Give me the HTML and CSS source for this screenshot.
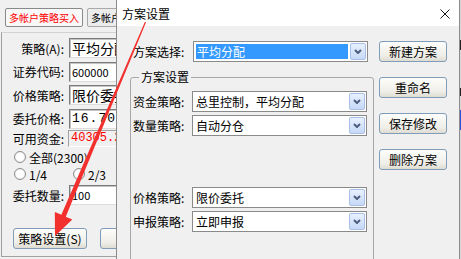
FILE: index.html
```html
<!DOCTYPE html>
<html lang="zh-CN">
<head>
<meta charset="utf-8">
<title>方案设置</title>
<link rel="stylesheet" href="styles.css">
</head>
<body>
<div class="screen">
  <div class="main">
    <div class="tabs">
      <div class="tab tab-active">多帐户策略买入</div>
      <div class="tab">多帐户策略卖出</div>
    </div>
    <div class="panel">
      <div class="frow r1"><span class="flabel">策略(A):</span><div class="field cjk">平均分配</div></div>
      <div class="frow r2"><span class="flabel">证券代码:</span><div class="field num">600000</div></div>
      <div class="frow r2"><span class="flabel">价格策略:</span><div class="field cjk">限价委托</div></div>
      <div class="frow r2"><span class="flabel">委托价格:</span><div class="field mono">16.70</div></div>
      <div class="frow rro"><span class="flabel">可用资金:</span><div class="field field-ro">40305.27</div></div>
      <div class="rrow rr1"><span class="opt"><span class="radio"></span>全部(2300)</span></div>
      <div class="rrow rr2"><span class="opt"><span class="radio"></span>1/4</span><span class="opt"><span class="radio"></span>2/3</span></div>
      <div class="frow rq"><span class="flabel">委托数量:</span><div class="field num">100</div></div>
      <div class="brow"><div class="btn btn-main">策略设置(S)</div><div class="btn btn-reset">重置</div></div>
    </div>
  </div>

  <div class="dialog">
    <div class="titlebar">
      <span class="title">方案设置</span>
      <svg class="close" width="10" height="10" viewBox="0 0 10 10"><path d="M0.5 0.5 L9.5 9.5 M9.5 0.5 L0.5 9.5" stroke="#1a1a1a" stroke-width="1" fill="none"/></svg>
    </div>
    <div class="dbody">
      <div class="dmain">
        <div class="selrow">
          <span class="slabel">方案选择:</span>
          <div class="combo"><div class="combo-text combo-sel">平均分配</div><div class="combo-btn"><svg width="8" height="5" viewBox="0 0 8 5"><path d="M1 1 L4 4 L7 1" stroke="#4b5d7c" stroke-width="2" fill="none"/></svg></div></div>
        </div>
        <fieldset class="group">
          <legend>方案设置</legend>
          <div class="grow"><span class="glabel">资金策略:</span><div class="combo"><div class="combo-text">总里控制，平均分配</div><div class="combo-btn"><svg width="8" height="5" viewBox="0 0 8 5"><path d="M1 1 L4 4 L7 1" stroke="#4b5d7c" stroke-width="2" fill="none"/></svg></div></div></div>
          <div class="grow"><span class="glabel">数量策略:</span><div class="combo"><div class="combo-text">自动分仓</div><div class="combo-btn"><svg width="8" height="5" viewBox="0 0 8 5"><path d="M1 1 L4 4 L7 1" stroke="#4b5d7c" stroke-width="2" fill="none"/></svg></div></div></div>
          <div class="grow grow-gap"><span class="glabel">价格策略:</span><div class="combo"><div class="combo-text">限价委托</div><div class="combo-btn"><svg width="8" height="5" viewBox="0 0 8 5"><path d="M1 1 L4 4 L7 1" stroke="#4b5d7c" stroke-width="2" fill="none"/></svg></div></div></div>
          <div class="grow"><span class="glabel">申报策略:</span><div class="combo"><div class="combo-text">立即申报</div><div class="combo-btn"><svg width="8" height="5" viewBox="0 0 8 5"><path d="M1 1 L4 4 L7 1" stroke="#4b5d7c" stroke-width="2" fill="none"/></svg></div></div></div>
        </fieldset>
      </div>
      <div class="dbtns">
        <div class="btn">新建方案</div>
        <div class="btn">重命名</div>
        <div class="btn">保存修改</div>
        <div class="btn">删除方案</div>
      </div>
    </div>
  </div>
  <div class="edge"></div>

  <svg class="arrow" width="461" height="259" viewBox="0 0 461 259">
    <polygon points="144.95,21.77 146.05,22.23 65.78,216.68 72.32,219.44 55,236 54.82,212.04 61.36,214.80" fill="#f2302e"/>
  </svg>
</div>
</body>
</html>
```

FILE: styles.css
```css
* { box-sizing: border-box; }
html, body { margin: 0; padding: 0; }
body {
  width: 461px;
  height: 259px;
  overflow: hidden;
  background: #f0f0f0;
  font-family: "Noto Sans CJK SC", "Liberation Sans", sans-serif;
  font-size: 12px;
  color: #000;
}
.screen {
  position: relative;
  display: flex;
  width: 461px;
  height: 259px;
  overflow: hidden;
}

/* ---------- main window (left) ---------- */
.main {
  width: 116px;
  flex: none;
  overflow: hidden;
  background: #f0f0f0;
}
.tabs {
  height: 32px;
  display: flex;
  gap: 4px;
  padding: 8px 0 0 5px;
  white-space: nowrap;
}
.tab {
  flex: none;
  height: 19px;
  padding: 0 3px;
  border: 1px solid #a9a9a9;
  border-radius: 2px;
  background: #ececec;
  font-size: 10px;
  line-height: 17px;
}
.tab-active {
  color: #ff0000;
  background: #f8f8f8;
  border-color: #8a8a8a;
}
.panel {
  margin-left: 1px;
  width: 220px;
  height: 225px;
  border-left: 1px solid #a0a0a0;
  border-top: 1px solid #d2d2d2;
  border-bottom: 1px solid #a0a0a0;
  padding-top: 5px;
  display: flex;
  flex-direction: column;
}
.frow {
  flex: none;
  display: flex;
  align-items: center;
  height: 20px;
}
.r2 { margin-top: 3.5px; }
.rro { margin-top: 1.5px; height: 17px; }
.rq { margin-top: 3px; }
.flabel {
  width: 62px;
  margin-right: 5px;
  text-align: right;
  white-space: nowrap;
}
.field {
  width: 130px;
  height: 100%;
  padding-left: 2px;
  background: #fff;
  border: 1px solid;
  border-color: #7a7a7a #dcdcdc #dcdcdc #7a7a7a;
  box-shadow: inset 1px 1px 0 #c4c4c4;
  white-space: nowrap;
  overflow: hidden;
  line-height: 18px;
}
.cjk { font-size: 14px; }
.num { font-size: 11px; }
.mono {
  font-family: "Liberation Mono", monospace;
  font-size: 13px;
  letter-spacing: 1px;
}
.field-ro {
  margin-left: -1px;
  background: transparent;
  color: #ff0000;
  font-family: "Liberation Mono", monospace;
  font-size: 12px;
  line-height: 15px;
  border-color: #a0a0a0 #ffffff #ffffff #a0a0a0;
  box-shadow: none;
}
.rrow {
  flex: none;
  display: flex;
  align-items: center;
  height: 16px;
  padding-left: 12px;
  white-space: nowrap;
}
.rr1 { margin-top: 2px; }
.rr2 { margin-top: 1px; }
.opt {
  display: flex;
  align-items: center;
  width: 59px;
}
.radio {
  width: 12px;
  height: 12px;
  flex: none;
  margin-right: 3px;
  border-radius: 50%;
  border: 1px solid #8d8d8d;
  background: radial-gradient(circle, #ffffff 45%, #dedede 100%);
}
.brow {
  flex: none;
  display: flex;
  gap: 13px;
  margin-top: 23px;
  padding-left: 11px;
}
.btn {
  height: 21px;
  border: 1px solid #7f9db9;
  border-radius: 3px;
  background: linear-gradient(#fdfdfb, #efeee8 70%, #dedcd2);
  line-height: 19px;
  text-align: center;
  white-space: nowrap;
}
.btn-main { width: 74px; flex: none; }
.btn-reset { width: 74px; flex: none; }

/* ---------- dialog ---------- */
.dialog {
  width: 344px;
  flex: none;
  border-left: 1px solid #8c8c8c;
  border-right: 1px solid #8c8c8c;
  background: #f0f0f0;
  display: flex;
  flex-direction: column;
}
.titlebar {
  height: 26px;
  flex: none;
  background: #fff;
  display: flex;
  align-items: center;
  justify-content: space-between;
  padding: 0 9px 0 5px;
}
.close { margin-top: 1px; }
.dbody {
  display: flex;
  padding-top: 15px;
}
.dmain { width: 257px; flex: none; }
.dbtns {
  width: 68px;
  margin-left: 5px;
  display: flex;
  flex-direction: column;
  gap: 15px;
}
.selrow {
  display: flex;
  align-items: center;
  height: 21px;
  padding-left: 16px;
}
.slabel { width: 60px; white-space: nowrap; }
.combo {
  width: 175px;
  height: 21px;
  flex: none;
  display: flex;
  padding: 1px;
  border: 1px solid #8a8a8a;
  background: #fff;
}
.combo-text {
  flex: 1;
  padding-left: 2px;
  line-height: 17px;
  white-space: nowrap;
  overflow: hidden;
}
.combo-sel {
  margin: 1px 2px 1px 1px;
  padding-left: 1px;
  background: #3399ff;
  color: #fff;
  line-height: 15px;
}
.combo-btn {
  width: 16px;
  flex: none;
  border: 1px solid #a9bfe6;
  border-radius: 2px;
  background: linear-gradient(#e8f0fd, #c6d9f7);
  display: flex;
  align-items: center;
  justify-content: center;
}
.group {
  margin: 8px 0 0 13px;
  width: 244px;
  height: 200px;
  min-width: 0;
  border: 1px solid #a8a8a8;
  border-radius: 3px;
  padding: 7px 0 0 2px;
}
.group legend {
  margin-left: 6px;
  padding: 0 2px;
  font-size: 12px;
  line-height: 14px;
}
.grow {
  display: flex;
  align-items: center;
  height: 21px;
}
.grow + .grow { margin-top: 3px; }
.grow.grow-gap { margin-top: 51px; }
.glabel { width: 59px; white-space: nowrap; }

.edge {
  width: 1px;
  flex: none;
  background: linear-gradient(#d8d8d8 0 40px, #222 40px 50px, #d8d8d8 50px 88px, #222 88px 96px, #d8d8d8 96px 110px, #3050e0 110px 130px, #d8d8d8 130px);
}

/* ---------- annotation arrow ---------- */
.arrow {
  position: absolute;
  left: 0;
  top: 0;
  pointer-events: none;
}
```
